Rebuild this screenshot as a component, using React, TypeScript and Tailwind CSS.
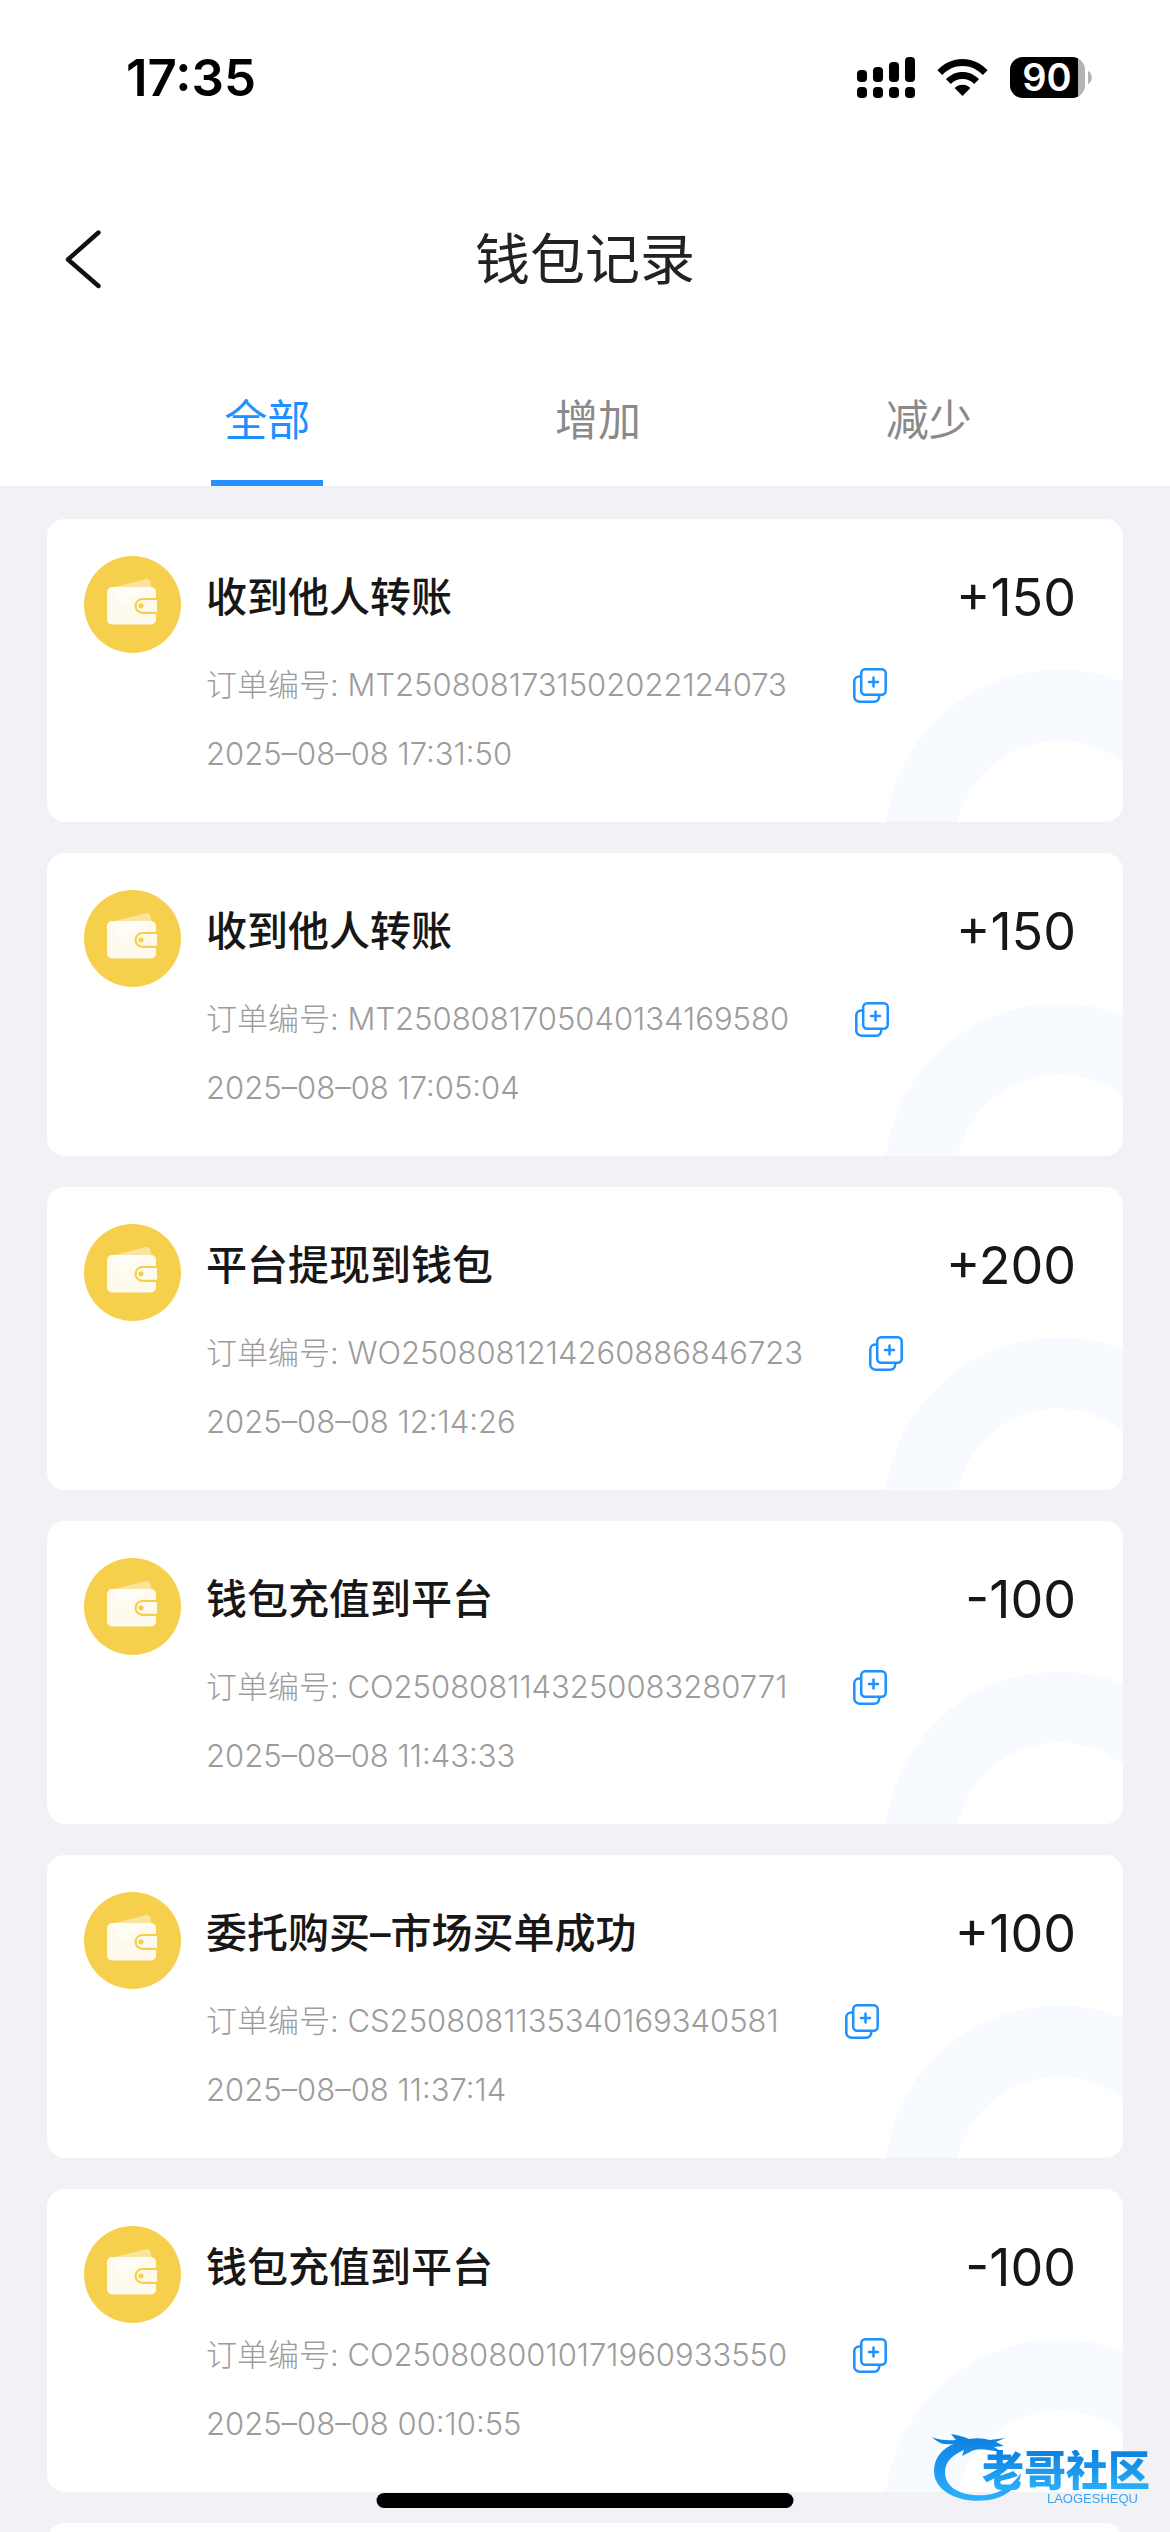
import { useState } from "react";

type RecordItem = {
  title: string;
  amount: string;
  orderNo: string;
  time: string;
};

const tabs = ["全部", "增加", "减少"];

const records: RecordItem[] = [
  {
    title: "收到他人转账",
    amount: "+150",
    orderNo: "MT2508081731502022124073",
    time: "2025–08–08 17:31:50",
  },
  {
    title: "收到他人转账",
    amount: "+150",
    orderNo: "MT2508081705040134169580",
    time: "2025–08–08 17:05:04",
  },
  {
    title: "平台提现到钱包",
    amount: "+200",
    orderNo: "WO2508081214260886846723",
    time: "2025–08–08 12:14:26",
  },
  {
    title: "钱包充值到平台",
    amount: "-100",
    orderNo: "CO2508081143250083280771",
    time: "2025–08–08 11:43:33",
  },
  {
    title: "委托购买–市场买单成功",
    amount: "+100",
    orderNo: "CS2508081135340169340581",
    time: "2025–08–08 11:37:14",
  },
  {
    title: "钱包充值到平台",
    amount: "-100",
    orderNo: "CO2508080010171960933550",
    time: "2025–08–08 00:10:55",
  },
];

function StatusBar() {
  return (
    <div className="flex h-[154px] items-start justify-between pt-[57px] pr-[78px] pl-[126px]">
      <span className="text-[51px] leading-[42px] font-semibold text-black">17:35</span>
      <div className="flex items-center">
        {/* Dual SIM signal */}
        <svg width="58" height="41" viewBox="0 0 58 41" className="mr-[22px]">
          <rect x="0" y="13" width="10" height="12" rx="4" />
          <rect x="16" y="10" width="10" height="15" rx="4" />
          <rect x="32" y="5" width="10" height="20" rx="4" />
          <rect x="48" y="0" width="10" height="25" rx="4" />
          <rect x="0" y="30" width="10" height="11" rx="4" />
          <rect x="16" y="30" width="10" height="11" rx="4" />
          <rect x="32" y="30" width="10" height="11" rx="4" />
          <rect x="48" y="30" width="10" height="11" rx="4" />
        </svg>
        {/* Wifi */}
        <svg width="51" height="37" viewBox="0 0 51 37" className="mr-[22px]">
          <path d="M0.4 11.2C7 4.2 16 0 25.5 0S44 4.2 50.6 11.2L45.8 16C40.4 10.3 33.2 7 25.5 7S10.6 10.3 5.2 16Z" />
          <path d="M9 20.2C13.4 15.6 19.2 13 25.5 13S37.6 15.6 42 20.2L37.2 25C34.1 21.8 29.9 20 25.5 20S16.9 21.8 13.8 25Z" />
          <path d="M17.6 29C19.7 26.9 22.5 25.7 25.5 25.7S31.3 26.9 33.4 29L25.5 37Z" />
        </svg>
        {/* Battery */}
        <div className="relative flex h-[41px] w-[82px] items-center">
          <svg width="82" height="41" viewBox="0 0 82 41" className="absolute inset-0">
            <clipPath id="battery">
              <rect width="75" height="41" rx="13" />
            </clipPath>
            <g clipPath="url(#battery)">
              <rect width="75" height="41" fill="#b3b3b3" />
              <rect width="68" height="41" fill="#000" />
            </g>
            <path d="M78 14C83 16 83 25 78 27Z" fill="#b3b3b3" />
          </svg>
          <span className="relative w-[74px] text-center text-[38px] leading-[41px] font-semibold text-white">
            90
          </span>
        </div>
      </div>
    </div>
  );
}

function WalletIcon() {
  return (
    <svg width="97" height="97" viewBox="0 0 97 97" className="shrink-0">
      <circle cx="48.5" cy="48.5" r="48.5" fill="#f6cf4c" />
      <path d="M27 32L61 23.2Q65 22.4 66.5 26L67.5 32Z" fill="#fae59f" />
      <rect x="23" y="31" width="49" height="37.5" rx="5" fill="#fffaee" />
      <path d="M28 35L39 51L44 42L66 33V31H28Z" fill="#fffdf8" />
      <path d="M73 43H58.5A6.8 6.8 0 0 0 58.5 56.8H73" fill="#fffaee" stroke="#f6cf4c" strokeWidth="2.2" />
      <circle cx="57" cy="49.8" r="2.6" fill="#f6cf4c" />
    </svg>
  );
}

function CopyIcon() {
  return (
    <svg width="34" height="35" viewBox="0 0 34 35" fill="none" stroke="#1e90ff" strokeWidth="2.5" strokeLinecap="round">
      <rect x="8.2" y="1.3" width="24.5" height="25.5" rx="4" />
      <path d="M7 8.5H6A4.8 4.8 0 0 0 1.3 13V28.7A5 5 0 0 0 6.3 33.7H21Q26 33.7 26.3 28" />
      <path d="M20.5 9.5V18.5M16 14H25" />
    </svg>
  );
}

function RecordCard({ item }: { item: RecordItem }) {
  return (
    <li className="relative h-[303px] shrink-0 overflow-hidden rounded-[18px] bg-white">
      <svg width="239" height="152" viewBox="0 0 239 152" className="absolute right-0 bottom-0">
        <circle cx="175" cy="174" r="139" fill="none" stroke="#f7fbff" strokeWidth="71" />
      </svg>
      <div className="relative flex pt-[37px] pr-[47px] pl-[37px]">
        <WalletIcon />
        <div className="ml-[25px] flex-1">
          <div className="flex h-[84px] items-center justify-between text-[#171717]">
            <h2 className="text-[41px] font-medium">{item.title}</h2>
            <span className="text-[52px]">{item.amount}</span>
          </div>
          <div className="flex h-[90px] items-center text-[31px] font-light text-[#9c9c9c]">
            <span>订单编号: {item.orderNo}</span>
            <button aria-label="复制" className="ml-[66px]">
              <CopyIcon />
            </button>
          </div>
          <p className="h-[48px] text-[31px] leading-[48px] font-light text-[#9c9c9c]">{item.time}</p>
        </div>
      </div>
    </li>
  );
}

export default function App() {
  const [activeTab, setActiveTab] = useState("全部");

  return (
    <div className="flex h-screen flex-col overflow-hidden bg-[#f2f1f6] font-[Inter,'Noto_Sans_CJK_SC',sans-serif]">
      <div className="bg-white">
        <StatusBar />

        {/* Title bar */}
        <header className="flex h-[210px] items-center justify-between px-[64px]">
          <button aria-label="返回">
            <svg width="38" height="60" viewBox="0 0 38 60" fill="none" stroke="#111" strokeWidth="4.4">
              <path d="M34.5 3.5L4 30.5L34.5 57" strokeLinecap="round" strokeLinejoin="round" />
            </svg>
          </button>
          <h1 className="text-[55px] text-[#222]">钱包记录</h1>
          <div className="w-[38px]" />
        </header>

        {/* Tabs */}
        <nav className="flex pr-[76px] pl-[102px]">
          {tabs.map((tab) => (
            <button
              key={tab}
              onClick={() => setActiveTab(tab)}
              className={`flex h-[122px] flex-1 flex-col items-center justify-between text-[43px] ${
                activeTab === tab ? "text-[#1e90ff]" : "text-[#8a8a8a]"
              }`}
            >
              <span className="pt-6">{tab}</span>
              <span className={`h-[6px] w-[112px] ${activeTab === tab ? "bg-[#2690ff]" : ""}`} />
            </button>
          ))}
        </nav>
      </div>

      {/* Records */}
      <ul className="flex flex-1 flex-col gap-[31px] overflow-hidden px-[47px] pt-[33px]">
        {records.map((item) => (
          <RecordCard key={item.orderNo} item={item} />
        ))}
        <li className="h-[303px] shrink-0 rounded-[18px] bg-white" />
      </ul>

      {/* Community logo */}
      <div className="fixed right-[14px] bottom-[28px] h-[76px] w-[224px]">
        <svg width="100" height="76" viewBox="0 0 100 76" className="absolute top-0 left-0">
          <defs>
            <linearGradient id="dragon" x1="0" y1="0" x2="0" y2="1">
              <stop offset="0" stopColor="#0b7fe0" />
              <stop offset="1" stopColor="#2bb2fb" />
            </linearGradient>
          </defs>
          <path
            d="M0 9Q9 13 24 12L19 6Q30 8 37 11Q48 9 58 12L73 10L64 14L72 18L62 19L70 24L56 22Q44 20 38 24L30 28L32 22Q13 30 13 44C13 62 34 69 54 67C70 65 82 56 89 45Q88 60 68 69C44 78 10 71 3 50C-1 34 8 21 22 16Q8 18 0 9Z"
            fill="url(#dragon)"
          />
        </svg>
        <div className="absolute top-[22px] right-[6px] flex flex-col items-end">
          <span className="bg-linear-to-b from-[#0b7fe0] to-[#2bb2fb] bg-clip-text text-[42px] leading-[42px] font-black text-transparent">
            老哥社区
          </span>
          <span className="pr-3 font-['Liberation_Sans',sans-serif] text-[13px] leading-[13px] text-[#3ba5f0]">
            LAOGESHEQU
          </span>
        </div>
      </div>

      {/* Home indicator */}
      <div className="fixed bottom-[24px] left-1/2 h-[15px] w-[417px] -translate-x-1/2 rounded-full bg-black" />
    </div>
  );
}
